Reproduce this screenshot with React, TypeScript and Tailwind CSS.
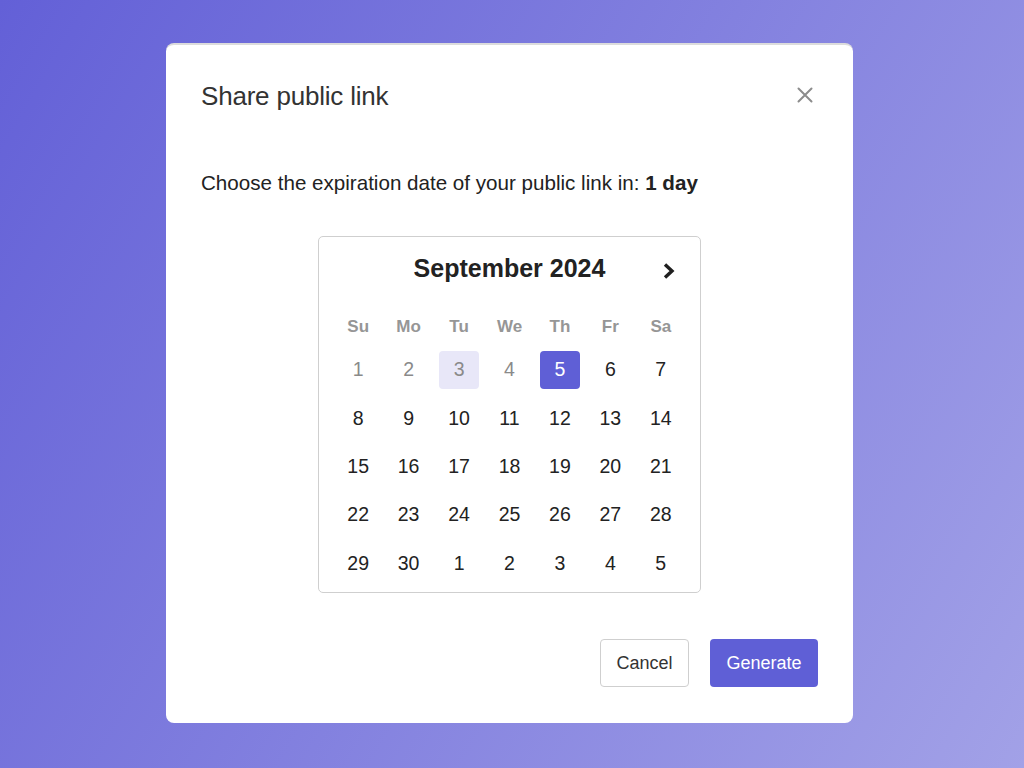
import React from "react";

const days = ["Su", "Mo", "Tu", "We", "Th", "Fr", "Sa"];

type Cell = { d: number; kind: "past" | "today" | "selected" | "normal" };

const rows: Cell[][] = [
  [
    { d: 1, kind: "past" },
    { d: 2, kind: "past" },
    { d: 3, kind: "today" },
    { d: 4, kind: "past" },
    { d: 5, kind: "selected" },
    { d: 6, kind: "normal" },
    { d: 7, kind: "normal" },
  ],
  [8, 9, 10, 11, 12, 13, 14].map((d) => ({ d, kind: "normal" as const })),
  [15, 16, 17, 18, 19, 20, 21].map((d) => ({ d, kind: "normal" as const })),
  [22, 23, 24, 25, 26, 27, 28].map((d) => ({ d, kind: "normal" as const })),
  [29, 30, 1, 2, 3, 4, 5].map((d) => ({ d, kind: "normal" as const })),
];

function DayCell({ c }: { c: Cell }) {
  let cls = "text-[#222]";
  if (c.kind === "past") cls = "text-[#8a8a8a]";
  if (c.kind === "today") cls = "text-[#8a8a8a] bg-[#e8e7f8]";
  if (c.kind === "selected") cls = "text-white bg-[#5f5fd6]";
  return (
    <div className="flex justify-center">
      <div className={`w-[40px] h-[38px] rounded-[4px] flex items-center justify-center text-[19.5px] ${cls}`}>
        {c.d}
      </div>
    </div>
  );
}

export default function App() {
  return (
    <div
      className="w-[1024px] h-[768px] flex items-start justify-start bg-[linear-gradient(120deg,#6360d7_0%,#a2a1e7_100%)] pt-[43px] pl-[166px]"
      style={{ fontFamily: '"Liberation Sans", Arial, Helvetica, sans-serif' }}
    >
      <div className="w-[687px] h-[680px] bg-white rounded-[8px] border-t-2 border-[#dcdcdc] flex flex-col px-[35px]">
        <div className="flex items-center justify-between h-[100px] pt-[2px]">
          <h1 className="text-[26px] text-[#333] tracking-[-0.2px]">Share public link</h1>
          <button className="w-[24px] h-[24px] flex items-center justify-center mr-[1px] mb-[2px]">
            <svg width="16" height="16" viewBox="0 0 16 16">
              <path d="M1.5 1.5 L14.5 14.5 M14.5 1.5 L1.5 14.5" stroke="#8c8c8c" strokeWidth="2" strokeLinecap="round" />
            </svg>
          </button>
        </div>
        <p className="text-[20.6px] text-[#222] mt-[26px] leading-[24px]">
          Choose the expiration date of your public link in: <b>1 day</b>
        </p>
        <div className="self-center mt-[41px] w-[383px] h-[357px] border border-[#cfcfcf] rounded-[5px] px-[14px] pt-[15px]">
          <div className="relative flex items-center justify-center h-[34px]">
            <span className="text-[25px] font-bold text-[#222]">September 2024</span>
            <svg className="absolute right-[10px] top-[10px]" width="14" height="18" viewBox="0 0 14 18">
              <path d="M3 2.5 L10 9 L3 15.5" stroke="#1f1f1f" strokeWidth="3.4" fill="none" strokeLinejoin="miter" />
            </svg>
          </div>
          <div className="grid grid-cols-7 mt-[27px] h-[28px] items-center">
            {days.map((d) => (
              <div key={d} className="text-center text-[17px] font-bold text-[#969696]">
                {d}
              </div>
            ))}
          </div>
          <div className="flex flex-col gap-[10.3px] mt-[10px]">
            {rows.map((r, i) => (
              <div key={i} className="grid grid-cols-7">
                {r.map((c, j) => (
                  <DayCell key={j} c={c} />
                ))}
              </div>
            ))}
          </div>
        </div>
        <div className="flex justify-end gap-[21px] mt-[46px]">
          <button className="w-[89px] h-[48px] border border-[#cfcfcf] rounded-[4px] text-[18px] text-[#333] bg-white">
            Cancel
          </button>
          <button className="w-[108px] h-[48px] rounded-[4px] text-[18px] text-white bg-[#5f5fd6]">
            Generate
          </button>
        </div>
      </div>
    </div>
  );
}
